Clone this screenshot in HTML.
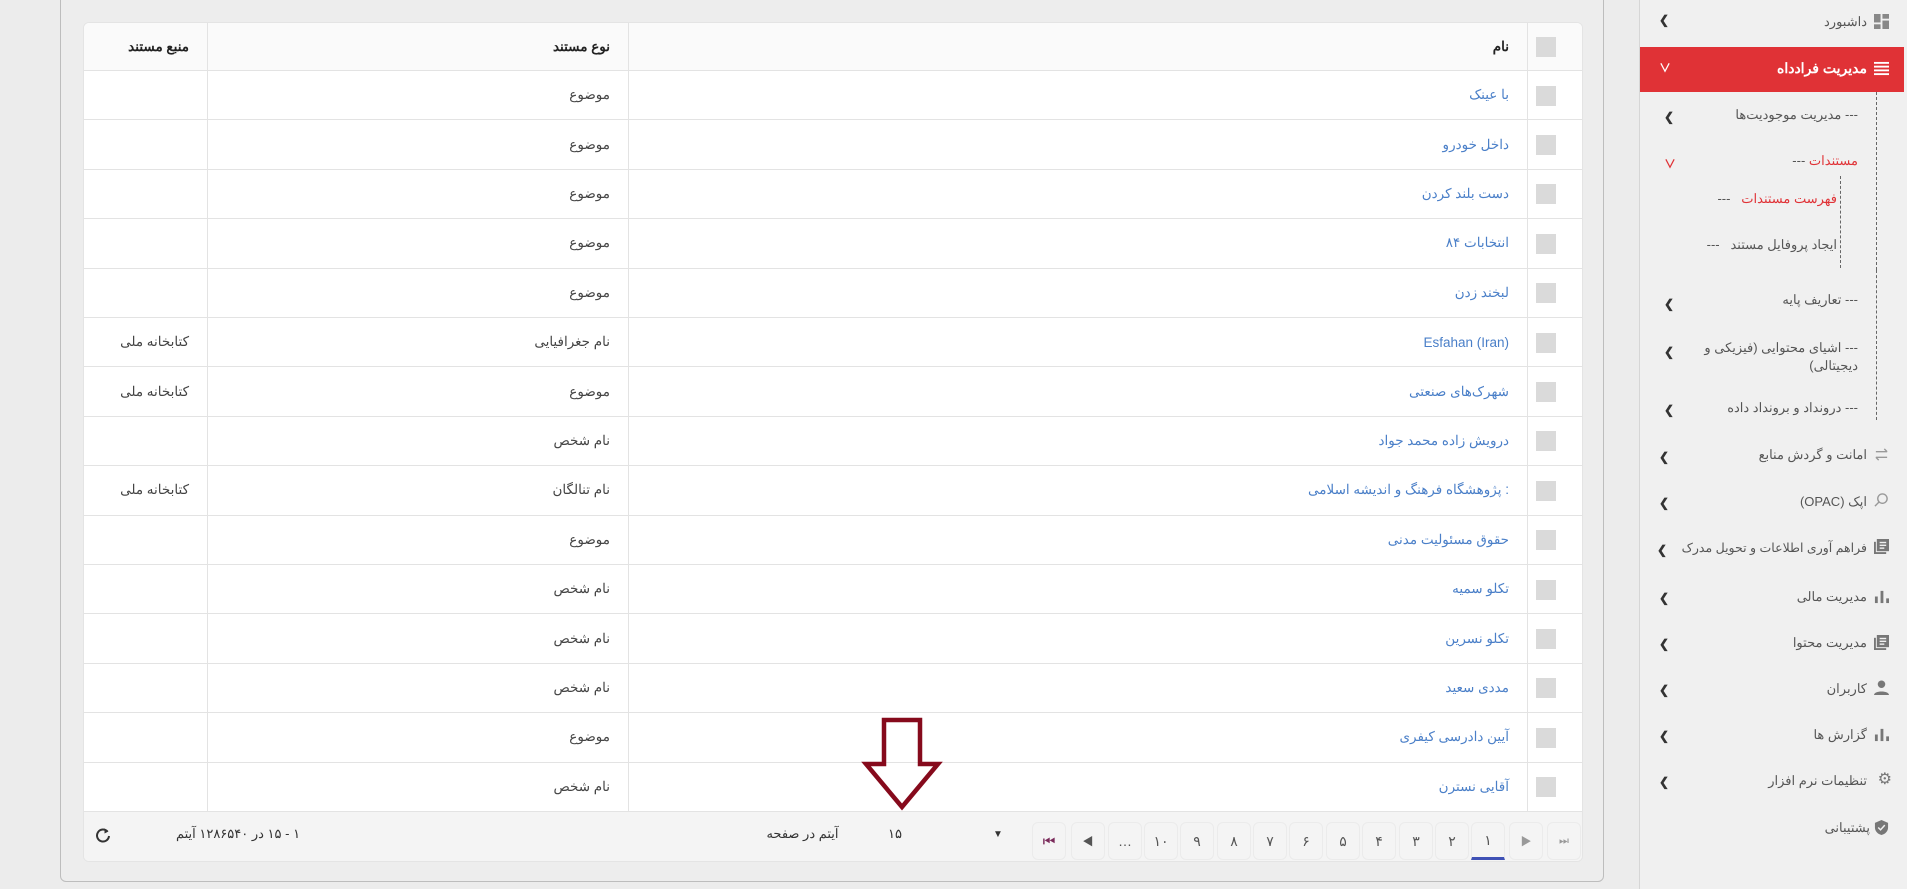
<!DOCTYPE html>
<html><head><meta charset="utf-8">
<style>
*{box-sizing:border-box;margin:0;padding:0}
body{width:1907px;height:889px;overflow:hidden;background:#ececec;font-family:"Liberation Sans","Noto Sans CJK SC",sans-serif;font-size:14px;color:#444;position:relative}
.panel{position:absolute;left:60px;top:-10px;width:1544px;height:892px;border:1px solid #bdbdbd;border-radius:0 0 6px 6px;background:#ededed}
.card{position:absolute;left:83px;top:22px;width:1500px;height:840px;background:#fff;border:1px solid #e4e4e4;border-radius:6px;overflow:hidden}
.row{position:absolute;left:0;width:1500px;height:49.4px;border-bottom:1px solid #e3e3e3}
.c{position:absolute;top:0;height:100%;display:flex;align-items:center;justify-content:flex-start;direction:rtl;text-align:right;font-size:13.5px}
.cb{position:absolute;left:1452px;top:14.7px;width:20px;height:20px;background:#dadada}
.v1{position:absolute;top:0;height:789px;width:1px;background:#e3e3e3}
.name{left:545px;width:880px;color:#4a7fc8}
.type{left:124px;width:402px;color:#444}
.src{left:0;width:105px;color:#444}
.hdr{background:#fafafa;height:48px}
.hdr .c{color:#222;font-weight:bold}
.foot{position:absolute;left:0;top:789px;width:1500px;height:51px;background:#f4f4f4}
.pb{position:absolute;top:822px;width:34px;height:38px;border:1px solid #ebebeb;border-radius:6px;display:flex;align-items:center;justify-content:center;color:#555;font-size:14px;background:#f4f4f4}
.sb{position:absolute;left:1639px;top:0;width:268px;height:889px;background:#f0f0f0;border-left:1px solid #d6d6d6}
.it{position:absolute;right:39px;direction:rtl;font-size:13px;color:#555;white-space:nowrap;line-height:18px}
.ch{position:absolute;left:1659px;font-size:12px;color:#333;font-weight:bold}
.ic{position:absolute;left:1874px;width:15px;height:15px}
</style></head><body>
<div class="panel"></div>
<div class="card">
 <div class="row hdr" style="top:0">
  <div class="cb" style="top:14px"></div>
  <div class="c name">نام</div><div class="c type">نوع مستند</div><div class="c src">منبع مستند</div>
 </div>
 <div class="row" style="top:48px"><div class="cb"></div><div class="c name">با عینک</div><div class="c type">موضوع</div></div>
 <div class="row" style="top:97.4px"><div class="cb"></div><div class="c name">داخل خودرو</div><div class="c type">موضوع</div></div>
 <div class="row" style="top:146.8px"><div class="cb"></div><div class="c name">دست بلند کردن</div><div class="c type">موضوع</div></div>
 <div class="row" style="top:196.2px"><div class="cb"></div><div class="c name">انتخابات ۸۴</div><div class="c type">موضوع</div></div>
 <div class="row" style="top:245.6px"><div class="cb"></div><div class="c name">لبخند زدن</div><div class="c type">موضوع</div></div>
 <div class="row" style="top:295px"><div class="cb"></div><div class="c name">Esfahan (Iran)</div><div class="c type">نام جغرافیایی</div><div class="c src">کتابخانه ملی</div></div>
 <div class="row" style="top:344.4px"><div class="cb"></div><div class="c name">شهرک‌های صنعتی</div><div class="c type">موضوع</div><div class="c src">کتابخانه ملی</div></div>
 <div class="row" style="top:393.8px"><div class="cb"></div><div class="c name">درویش زاده محمد جواد</div><div class="c type">نام شخص</div></div>
 <div class="row" style="top:443.2px"><div class="cb"></div><div class="c name">: پژوهشگاه فرهنگ و اندیشه اسلامی</div><div class="c type">نام تنالگان</div><div class="c src">کتابخانه ملی</div></div>
 <div class="row" style="top:492.6px"><div class="cb"></div><div class="c name">حقوق مسئولیت مدنی</div><div class="c type">موضوع</div></div>
 <div class="row" style="top:542px"><div class="cb"></div><div class="c name">تکلو سمیه</div><div class="c type">نام شخص</div></div>
 <div class="row" style="top:591.4px"><div class="cb"></div><div class="c name">تکلو نسرین</div><div class="c type">نام شخص</div></div>
 <div class="row" style="top:640.8px"><div class="cb"></div><div class="c name">مددی سعید</div><div class="c type">نام شخص</div></div>
 <div class="row" style="top:690.2px"><div class="cb"></div><div class="c name">آیین دادرسی کیفری</div><div class="c type">موضوع</div></div>
 <div class="row" style="top:739.6px;height:49.4px"><div class="cb"></div><div class="c name">آقایی نسترن</div><div class="c type">نام شخص</div></div>
 <div class="v1" style="left:123px"></div><div class="v1" style="left:544px"></div><div class="v1" style="left:1443px"></div>
 <div class="foot"></div>
</div>
<svg style="position:absolute;left:95px;top:827px" width="16" height="16" viewBox="0 0 16 16"><path d="M12.5 4.5A6 6 0 1 0 14 9" fill="none" stroke="#333" stroke-width="2"/><path d="M9.5 1.5L13.5 4.5L9.5 6.5Z" fill="#333"/></svg>
<div style="position:absolute;left:168px;top:826px;width:140px;text-align:center;direction:rtl;font-size:13px;color:#333">۱ - ۱۵ در ۱۲۸۶۵۴۰ آیتم</div>
<div style="position:absolute;left:755px;top:826px;width:95px;text-align:center;direction:rtl;font-size:13px;color:#333">آیتم در صفحه</div>
<div style="position:absolute;left:888px;top:826px;font-size:13px;color:#333">۱۵</div>
<div style="position:absolute;left:993px;top:829px;font-size:10px;color:#333">▼</div>
<div class="pb" style="left:1032px;color:#7a2a5a">⏮</div>
<div class="pb" style="left:1071px;font-size:11px">◀</div>
<div class="pb" style="left:1108px">…</div>
<div class="pb" style="left:1144px">۱۰</div>
<div class="pb" style="left:1180px">۹</div>
<div class="pb" style="left:1217px">۸</div>
<div class="pb" style="left:1253px">۷</div>
<div class="pb" style="left:1289px">۶</div>
<div class="pb" style="left:1326px">۵</div>
<div class="pb" style="left:1362px">۴</div>
<div class="pb" style="left:1399px">۳</div>
<div class="pb" style="left:1435px">۲</div>
<div class="pb" style="left:1471px;border-bottom:3px solid #3f51b5;border-radius:6px 6px 0 0">۱</div>
<div class="pb" style="left:1509px;color:#999;font-size:11px">▶</div>
<div class="pb" style="left:1547px;color:#999;font-size:11px">⏭</div>
<svg style="position:absolute;left:860px;top:716px" width="86" height="98" viewBox="860 716 86 98"><path d="M884 720H920V764H938L902 807L866 764H884Z" fill="none" stroke="#860a1c" stroke-width="4.5" stroke-linejoin="miter"/></svg>
<div class="sb"></div>
<div style="position:absolute;left:1640px;top:47px;width:264px;height:45px;background:#e03236"></div>
<div style="position:absolute;left:1876px;top:92px;width:0;height:178px;border-left:1px dashed #666"></div>
<div style="position:absolute;left:1876px;top:270px;width:0;height:150px;border-left:1px dashed #666"></div>
<div style="position:absolute;left:1840px;top:176px;width:0;height:92px;border-left:1px dashed #666"></div>
<svg class="ic" style="top:14px" viewBox="0 0 16 16"><rect x="0" y="0" width="7" height="9" fill="#888"/><rect x="9" y="0" width="7" height="5" fill="#888"/><rect x="0" y="11" width="7" height="5" fill="#888"/><rect x="9" y="7" width="7" height="9" fill="#888"/></svg>
<div class="it" style="top:13px;right:40px">داشبورد</div><div class="ch" style="top:13px">&#x276E;</div>
<svg class="ic" style="top:61px" viewBox="0 0 16 16" fill="#fff"><rect x="0" y="1" width="16" height="2"/><rect x="0" y="5" width="16" height="2"/><rect x="0" y="9" width="16" height="2"/><rect x="0" y="13" width="16" height="2"/></svg>
<div class="it" style="top:59px;right:40px;color:#fff;font-weight:bold;font-size:14px">مدیریت فرادداه</div><div class="ch" style="top:59px;color:#fff">&#x2228;</div>
<div class="it" style="top:106px;right:49px">--- مدیریت موجودیت‌ها</div><div class="ch" style="top:110px;left:1664px">&#x276E;</div>
<div class="it" style="top:152px;right:49px"><span style="color:#e03236">مستندات</span> ---</div><div class="ch" style="top:155px;left:1664px;color:#e03236">&#x2228;</div>
<div class="it" style="top:190px;right:70px"><span style="color:#e03236">فهرست مستندات</span>&nbsp;&nbsp;&nbsp;---</div>
<div class="it" style="top:236px;right:70px">ایجاد پروفایل مستند&nbsp;&nbsp;&nbsp;---</div>
<div class="it" style="top:291px;right:49px">--- تعاریف پایه</div><div class="ch" style="top:297px;left:1664px">&#x276E;</div>
<div class="it" style="top:339px;right:49px;white-space:normal;width:170px">--- اشیای محتوایی (فیزیکی و دیجیتالی)</div><div class="ch" style="top:345px;left:1664px">&#x276E;</div>
<div class="it" style="top:399px;right:49px">--- درونداد و برونداد داده</div><div class="ch" style="top:403px;left:1664px">&#x276E;</div>
<svg class="ic" style="top:447px" viewBox="0 0 16 16" fill="none" stroke="#999" stroke-width="1.5"><path d="M2 5H14M11 2L14 5M14 11H2M5 14L2 11"/></svg>
<div class="it" style="top:446px;right:40px">امانت و گردش منابع</div><div class="ch" style="top:450px">&#x276E;</div>
<svg class="ic" style="top:493px" viewBox="0 0 16 16" fill="none" stroke="#999" stroke-width="1.5"><circle cx="9" cy="6" r="5"/><path d="M5.5 9.5L1 14"/></svg>
<div class="it" style="top:493px;right:40px">اپک (OPAC)</div><div class="ch" style="top:496px">&#x276E;</div>
<svg class="ic" style="top:539px" viewBox="0 0 16 16"><rect x="3" y="0" width="13" height="13" fill="#777"/><rect x="0" y="3" width="2" height="13" fill="#777"/><rect x="0" y="14" width="13" height="2" fill="#777"/><rect x="6" y="3" width="7" height="1.5" fill="#f0f0f0"/><rect x="6" y="6" width="7" height="1.5" fill="#f0f0f0"/><rect x="6" y="9" width="5" height="1.5" fill="#f0f0f0"/></svg>
<div class="it" style="top:539px;right:40px;font-size:12.5px">فراهم آوری اطلاعات و تحویل مدرک</div><div class="ch" style="top:543px;left:1657px">&#x276E;</div>
<svg class="ic" style="top:589px" viewBox="0 0 16 16" fill="#777"><rect x="1" y="8" width="3" height="7"/><rect x="7" y="2" width="3" height="13"/><rect x="13" y="10" width="3" height="5"/></svg>
<div class="it" style="top:588px;right:40px">مدیریت مالی</div><div class="ch" style="top:591px">&#x276E;</div>
<svg class="ic" style="top:635px" viewBox="0 0 16 16"><rect x="3" y="0" width="13" height="13" fill="#777"/><rect x="0" y="3" width="2" height="13" fill="#777"/><rect x="0" y="14" width="13" height="2" fill="#777"/><rect x="6" y="3" width="7" height="1.5" fill="#f0f0f0"/><rect x="6" y="6" width="7" height="1.5" fill="#f0f0f0"/><rect x="6" y="9" width="5" height="1.5" fill="#f0f0f0"/></svg>
<div class="it" style="top:634px;right:40px">مدیریت محتوا</div><div class="ch" style="top:637px">&#x276E;</div>
<svg class="ic" style="top:680px" viewBox="0 0 16 16" fill="#777"><circle cx="8" cy="4.5" r="4"/><path d="M0 16C0 11 16 11 16 16Z"/></svg>
<div class="it" style="top:680px;right:40px">کاربران</div><div class="ch" style="top:683px">&#x276E;</div>
<svg class="ic" style="top:727px" viewBox="0 0 16 16" fill="#777"><rect x="1" y="8" width="3" height="7"/><rect x="7" y="2" width="3" height="13"/><rect x="13" y="10" width="3" height="5"/></svg>
<div class="it" style="top:726px;right:40px">گزارش ها</div><div class="ch" style="top:729px">&#x276E;</div>
<div class="it" style="top:771px;right:15px;color:#777;font-size:16px">⚙</div>
<div class="it" style="top:772px;right:40px">تنظیمات نرم افزار</div><div class="ch" style="top:775px">&#x276E;</div>
<svg class="ic" style="top:820px" viewBox="0 0 16 16"><path d="M8 0L15 3V8C15 12 12 15 8 16C4 15 1 12 1 8V3Z" fill="#777"/><path d="M4.5 8L7 10.5L11.5 5.5" fill="none" stroke="#f0f0f0" stroke-width="1.6"/></svg>
<div class="it" style="top:819px;right:37px">پشتیبانی</div>
</body></html>
